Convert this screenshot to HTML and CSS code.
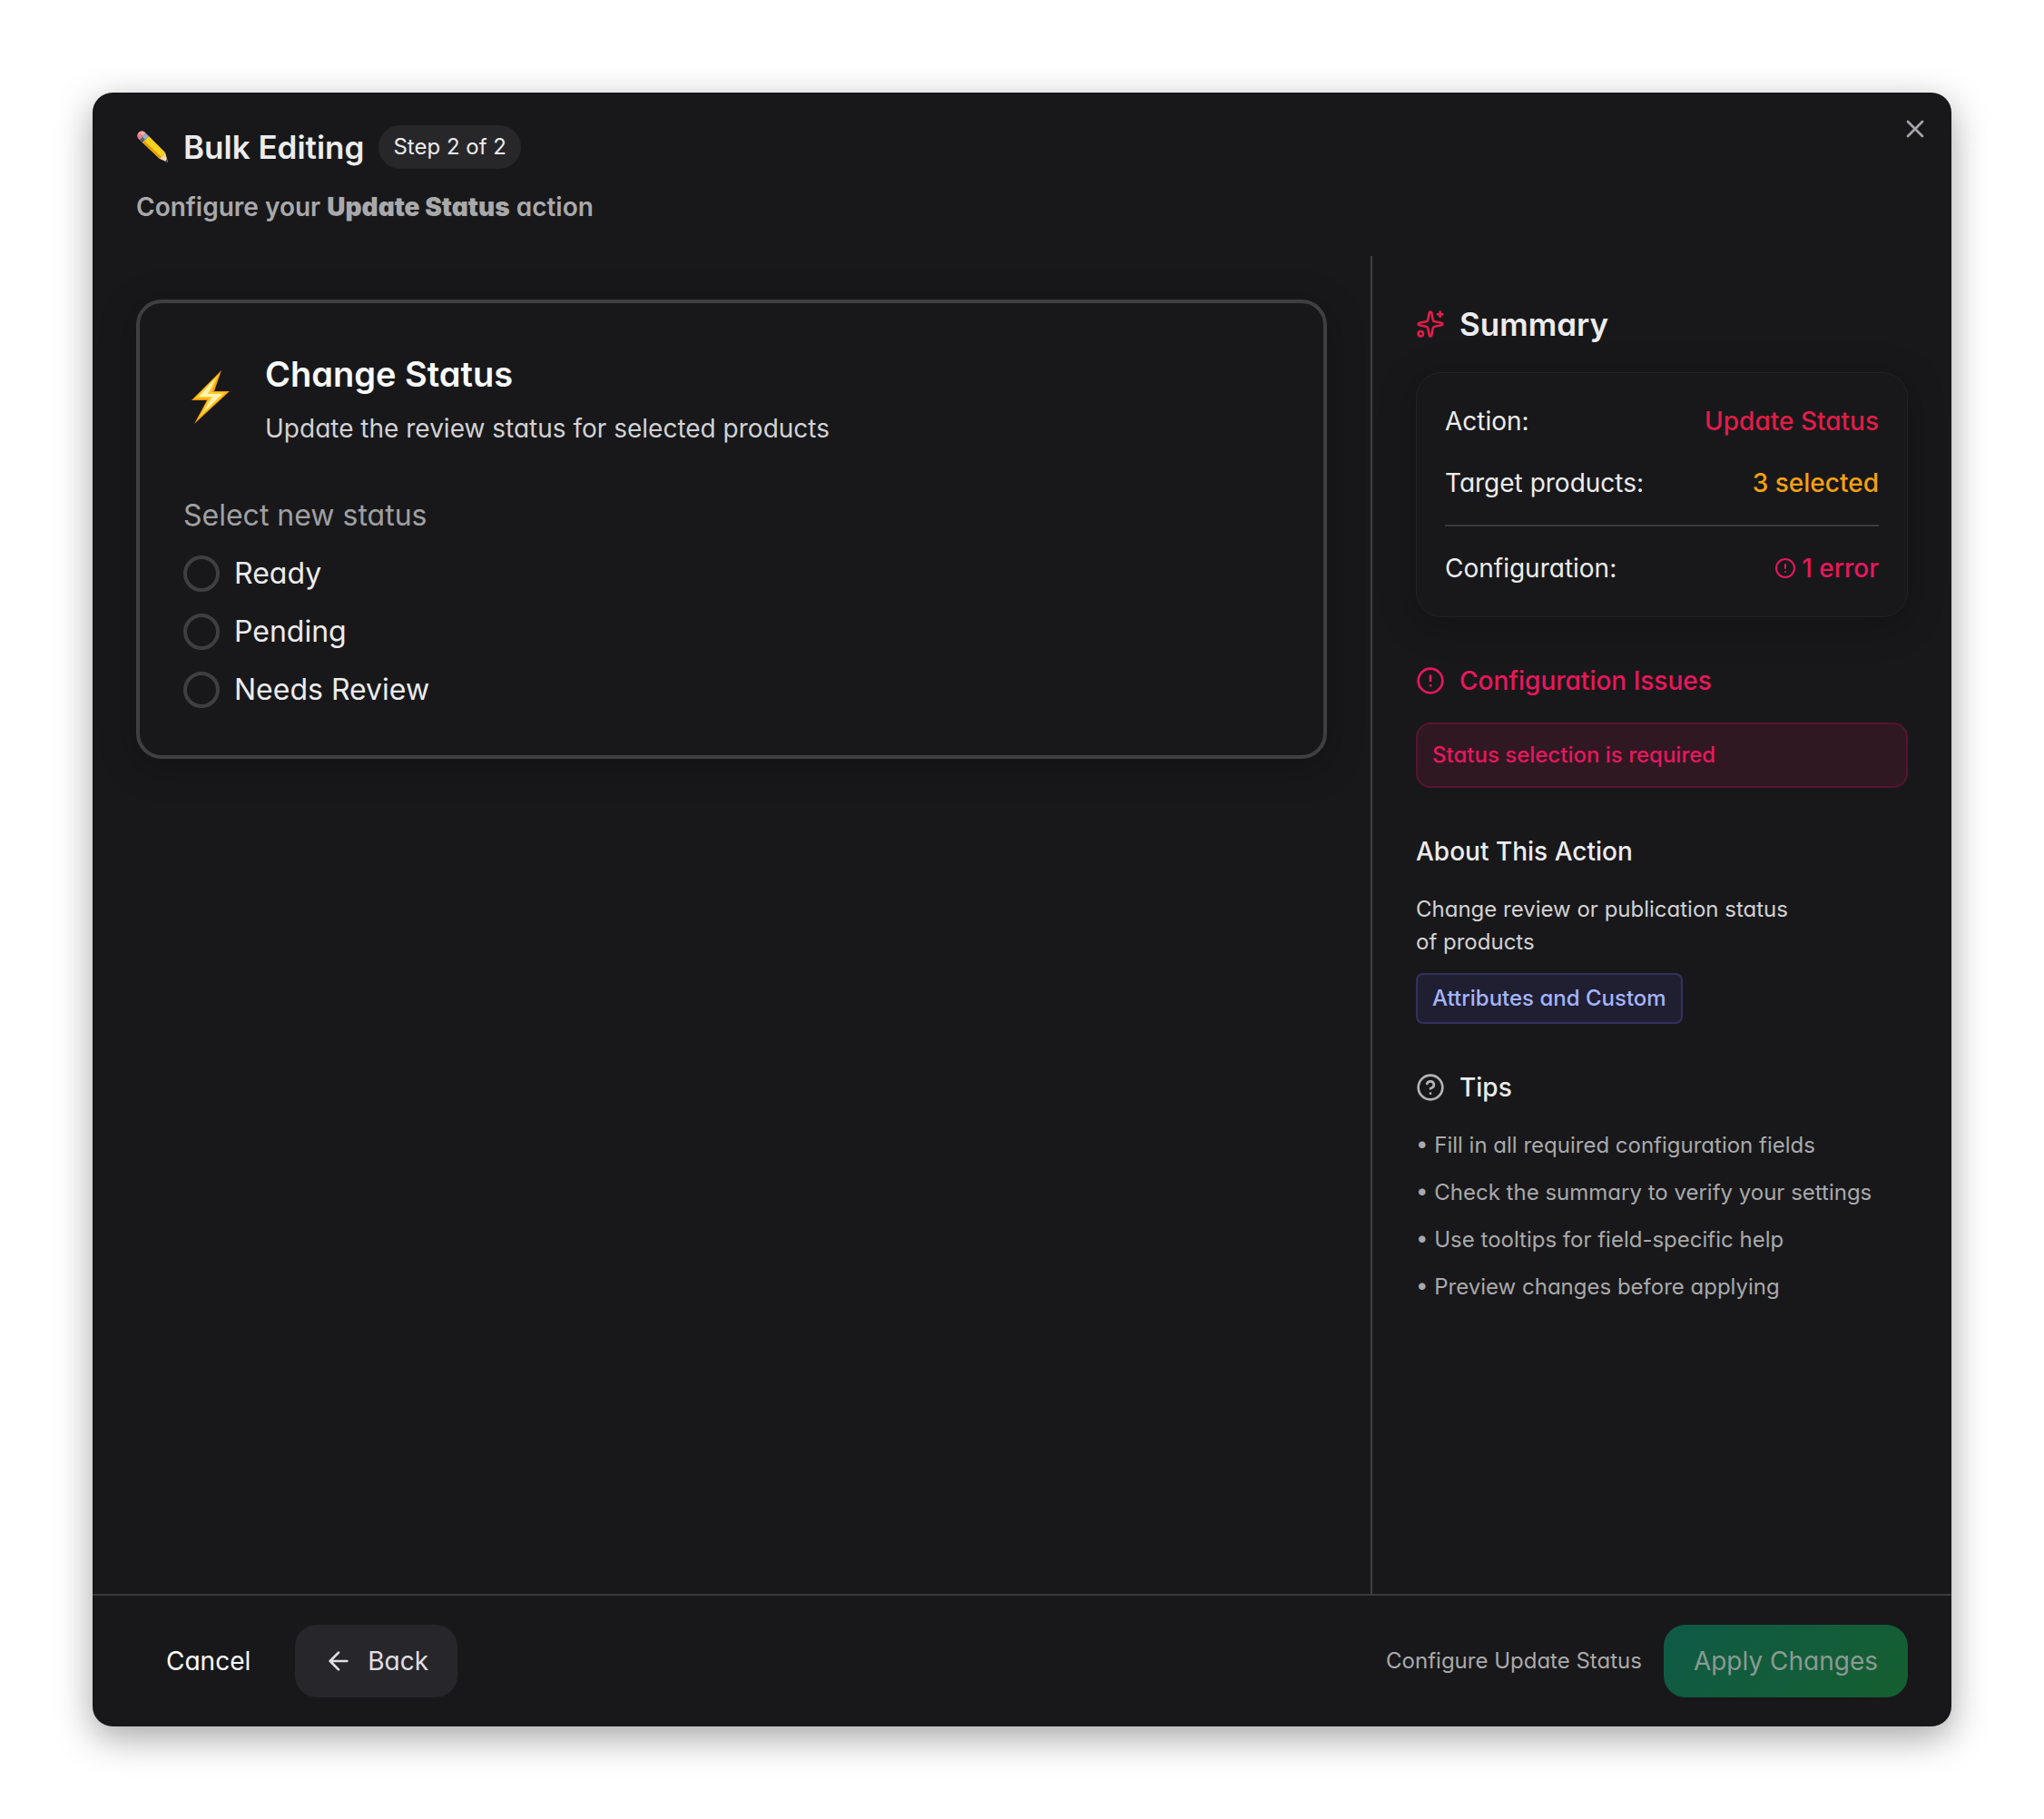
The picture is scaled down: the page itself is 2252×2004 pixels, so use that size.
FILE: index.html
```html
<!DOCTYPE html>
<html lang="en">
<head>
    <meta charset="utf-8">
    <title>Bulk Editing</title>
    <link rel="stylesheet" href="styles.css">
</head>
<body>
    <div class="modal" role="dialog" aria-labelledby="modal-title">
        <header class="modal-header">
            <div class="title-row">
                <svg class="emoji-pencil" viewBox="0 0 36 36" aria-hidden="true">
                    <path fill="#f3a9a4" d="M2 8 Q0 3 4 1 Q8 -1 11 3 L4 10 Z"/>
                    <path fill="#e87f86" d="M2 8 Q1 4 4 3 L8 6 L4 10 Z"/>
                    <path fill="#8fb2d6" d="M4 10 L11 3 L14 6 L7 13 Z"/>
                    <path fill="#56606e" d="M4 10 L7 7 L10 10 L7 13 Z"/>
                    <path fill="#fcd21c" d="M7 13 L14 6 L32 24 L26 31 Z"/>
                    <path fill="#e0a010" d="M7 13 L9 11 L28 29 L26 31 Z"/>
                    <path fill="#f7d9a0" d="M26 31 L32 24 L35 35 Z"/>
                    <path fill="#4a4a4c" d="M32 34 L34 31 L35 35 Z"/>
                </svg>
                <h1 id="modal-title">Bulk Editing</h1>
                <span class="step">Step 2 of 2</span>
            </div>
            <p class="subtitle">Configure your <strong>Update Status</strong> action</p>
            <button class="close" aria-label="Close">
                <svg class="icon" viewBox="0 0 24 24"><path d="M18 6 6 18M6 6l12 12"/></svg>
            </button>
        </header>

        <div class="modal-body">
            <main class="content">
                <section class="card">
                    <div class="card-header">
                        <svg class="emoji-bolt" viewBox="0 0 60 60" aria-hidden="true">
                            <path fill="#f59b0b" d="M42 1 L9 34 L26 34 L12 60 L51 24 L34 24 Z"/>
                            <path fill="#ffc928" d="M40 4 L12 32 L28 32 L16 55 L48 25 L31 25 Z"/>
                            <path fill="#fff3b0" d="M36 9 L17 30 L32 30 L22 47 L43 27 L27 27 Z"/>
                        </svg>
                        <div>
                            <h2>Change Status</h2>
                            <p>Update the review status for selected products</p>
                        </div>
                    </div>
                    <fieldset class="options">
                        <legend>Select new status</legend>
                        <label><input type="radio" name="status" value="ready">Ready</label>
                        <label><input type="radio" name="status" value="pending">Pending</label>
                        <label><input type="radio" name="status" value="needs_review">Needs Review</label>
                    </fieldset>
                </section>
            </main>

            <aside class="sidebar">
                <section>
                    <h2 class="heading heading-lg">
                        <svg class="icon icon-accent" viewBox="0 0 24 24">
                            <path d="M11.017 2.814a1 1 0 0 1 1.966 0l1.051 5.558a2 2 0 0 0 1.594 1.594l5.558 1.051a1 1 0 0 1 0 1.966l-5.558 1.051a2 2 0 0 0-1.594 1.594l-1.051 5.558a1 1 0 0 1-1.966 0l-1.051-5.558a2 2 0 0 0-1.594-1.594l-5.558-1.051a1 1 0 0 1 0-1.966l5.558-1.051a2 2 0 0 0 1.594-1.594z"/>
                            <path d="M20 2v4M22 4h-4"/>
                            <circle cx="4" cy="20" r="2"/>
                        </svg>
                        Summary
                    </h2>
                    <div class="summary">
                        <div class="row"><span>Action:</span><span class="accent">Update Status</span></div>
                        <div class="row"><span>Target products:</span><span class="warning">3 selected</span></div>
                        <div class="row row-last">
                            <span>Configuration:</span>
                            <span class="danger">
                                <svg class="icon icon-sm" viewBox="0 0 24 24"><circle cx="12" cy="12" r="10"/><path d="M12 8v4M12 16h.01"/></svg>
                                1 error
                            </span>
                        </div>
                    </div>
                </section>

                <section>
                    <h3 class="heading danger">
                        <svg class="icon" viewBox="0 0 24 24"><circle cx="12" cy="12" r="10"/><path d="M12 8v4M12 16h.01"/></svg>
                        Configuration Issues
                    </h3>
                    <div class="issue">Status selection is required</div>
                </section>

                <section>
                    <h3 class="heading">About This Action</h3>
                    <p class="about">Change review or publication status<br>of products</p>
                    <span class="tag">Attributes and Custom</span>
                </section>

                <section>
                    <h3 class="heading">
                        <svg class="icon icon-muted" viewBox="0 0 24 24"><circle cx="12" cy="12" r="10"/><path d="M9.09 9a3 3 0 0 1 5.83 1c0 2-3 3-3 3M12 17h.01"/></svg>
                        Tips
                    </h3>
                    <ul class="tips">
                        <li>• Fill in all required configuration fields</li>
                        <li>• Check the summary to verify your settings</li>
                        <li>• Use tooltips for field-specific help</li>
                        <li>• Preview changes before applying</li>
                    </ul>
                </section>
            </aside>
        </div>

        <footer class="modal-footer">
            <button class="btn">Cancel</button>
            <button class="btn btn-secondary">
                <svg class="icon" viewBox="0 0 24 24"><path d="m12 19-7-7 7-7M19 12H5"/></svg>
                Back
            </button>
            <span class="hint">Configure Update Status</span>
            <button class="btn btn-primary" disabled>Apply Changes</button>
        </footer>
    </div>
</body>
</html>
```
FILE: styles.css
```css
* {
    box-sizing: border-box;
    margin: 0;
    padding: 0;
}
body {
    min-height: 100vh;
    padding: 102px;
    display: flex;
    background: #fff;
    color: #ececee;
    font-family: Inter, sans-serif;
    font-feature-settings: "cv11";
    font-size: 28px;
    line-height: 40px;
}
button {
    font: inherit;
    font-feature-settings: inherit;
    color: inherit;
    border: none;
    background: none;
    cursor: pointer;
}
.icon {
    width: 32px;
    height: 32px;
    flex-shrink: 0;
    fill: none;
    stroke: currentColor;
    stroke-width: 2;
    stroke-linecap: round;
    stroke-linejoin: round;
}
.icon-sm {
    width: 24px;
    height: 24px;
}
.icon-muted {
    color: #b4b4b6;
}
.accent, .icon-accent {
    color: #e11d48;
}
.warning {
    color: #f5a012;
}
.danger {
    color: #e8175d;
}

.modal {
    position: relative;
    flex: 1;
    display: flex;
    flex-direction: column;
    background: #18181a;
    border-radius: 22px;
    box-shadow: 0 12px 40px rgba(0, 0, 0, 0.36);
}
.modal-header {
    padding: 36px 48px 34px;
}
.title-row {
    display: flex;
    align-items: center;
    gap: 16px;
}
.title-row h1 {
    font-size: 35px;
    font-weight: 600;
    line-height: 48px;
}
.emoji-pencil {
    width: 36px;
    height: 36px;
}
.step {
    padding: 4px 16px;
    border-radius: 24px;
    background: #27272a;
    font-size: 24px;
}
.subtitle {
    margin-top: 22px;
    color: #a9a9ab;
    font-weight: 600;
}
.subtitle strong {
    font-weight: 900;
}
.close {
    position: absolute;
    top: 24px;
    right: 24px;
    width: 32px;
    height: 32px;
    color: #a6a6aa;
}
.close .icon {
    display: block;
}

.modal-body {
    flex: 1;
    display: flex;
}
.content {
    flex: 1;
    padding: 48px;
}
.card {
    padding: 48px;
    border: 4px solid #3f3f42;
    border-radius: 28px;
    box-shadow: 0 8px 40px rgba(0, 0, 0, 0.25);
}
.card-header {
    display: flex;
    align-items: center;
    gap: 30px;
    margin-bottom: 52px;
}
.emoji-bolt {
    width: 60px;
    height: 60px;
}
.card-header h2 {
    margin-bottom: 10px;
    color: #fafafa;
    font-size: 38px;
    font-weight: 600;
    line-height: 60px;
}
.card-header p {
    color: #d2d2d4;
}
.options {
    display: flex;
    flex-direction: column;
    gap: 16px;
    border: none;
    font-size: 32px;
    line-height: 48px;
}
.options legend {
    margin-bottom: 16px;
    color: #a0a0a4;
}
.options label {
    display: flex;
    align-items: center;
    gap: 16px;
}
.options input {
    appearance: none;
    width: 40px;
    height: 40px;
    border: 4px solid #3f3f42;
    border-radius: 50%;
}
.options input:checked {
    border: 12px solid #e11d48;
}

.sidebar {
    width: 640px;
    padding: 48px;
    display: flex;
    flex-direction: column;
    gap: 50px;
    border-left: 2px solid #3f3f42;
}
.heading {
    display: flex;
    align-items: center;
    gap: 16px;
    margin-bottom: 26px;
    font-size: 28px;
    font-weight: 500;
}
.heading-lg {
    font-size: 35px;
    font-weight: 600;
    line-height: 54px;
}
.summary {
    padding: 31px;
    border: 1px solid #222225;
    border-radius: 28px;
    box-shadow: 0 8px 40px rgba(0, 0, 0, 0.25);
    line-height: 44px;
}
.row {
    display: flex;
    justify-content: space-between;
    margin-bottom: 24px;
}
.row .accent, .row .warning, .row .danger {
    font-weight: 500;
}
.row .danger {
    display: flex;
    align-items: center;
    gap: 6px;
}
.row-last {
    margin-bottom: 0;
    padding-top: 24px;
    border-top: 2px solid #3a3a3c;
}
.issue {
    padding: 14px 16px;
    border: 2px solid #57152e;
    border-radius: 16px;
    background: #2f1822;
    color: #e8175d;
    font-size: 24px;
    font-weight: 500;
}
.about {
    margin-bottom: 16px;
    color: #d2d2d4;
    font-size: 24px;
    line-height: 36px;
}
.tag {
    display: inline-block;
    padding: 6px 16px;
    border: 2px solid #34305f;
    border-radius: 8px;
    background: #201f31;
    color: #a5b4fc;
    font-size: 24px;
    font-weight: 500;
}
.tips {
    display: flex;
    flex-direction: column;
    gap: 16px;
    list-style: none;
    color: #a9a9ab;
    font-size: 24px;
    line-height: 36px;
}

.modal-footer {
    display: flex;
    align-items: center;
    gap: 16px;
    padding: 32px 48px;
    border-top: 2px solid #3a3a3c;
}
.btn {
    display: flex;
    align-items: center;
    padding: 20px 33px;
    border-radius: 24px;
    color: #fff;
}
.btn-secondary {
    gap: 16px;
    padding: 20px 32px;
    background: #27272b;
    color: #e0dfe6;
}
.hint {
    margin: 0 8px 0 auto;
    color: #a9a9ab;
    font-size: 24px;
}
.btn-primary {
    background: linear-gradient(135deg, #0f5a47, #165f30);
    color: #8b9a92;
}
```
